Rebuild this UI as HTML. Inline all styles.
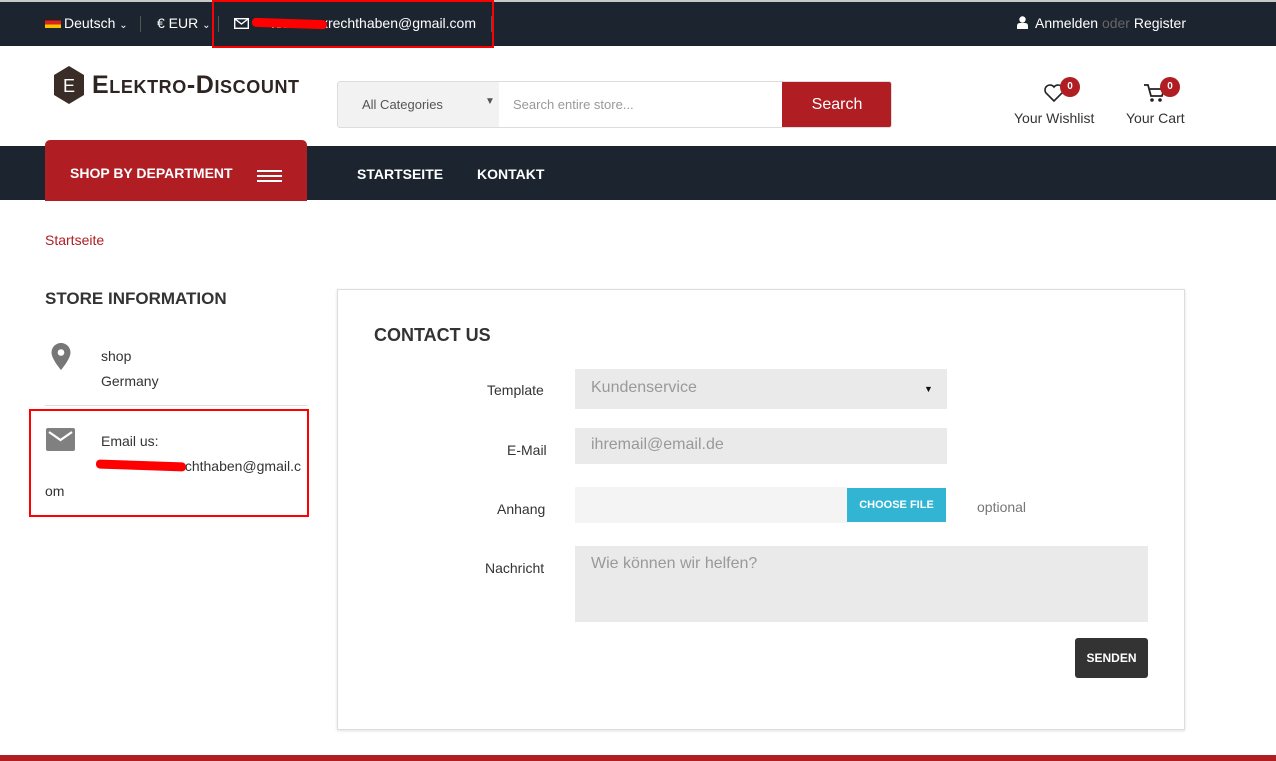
<!DOCTYPE html>
<html><head><meta charset="utf-8"><style>
*{box-sizing:border-box;margin:0;padding:0}
body{width:1276px;height:761px;overflow:hidden;background:#fff;font-family:"Liberation Sans",sans-serif;color:#333;position:relative}
.abs{position:absolute}
.top{position:absolute;left:0;top:0;width:1276px;height:46px;background:#1c2430;border-top:2px solid #c8c8c8;color:#fff;font-size:14px}
.nav{position:absolute;left:0;top:146px;width:1276px;height:54px;background:#1c2430}
.red{border:2px solid #f00}
</style></head><body>
<div class="top">
  <div class="abs" style="left:45px;top:15px;width:16px;height:11px;background:linear-gradient(#222 0 33%,#d22 33% 66%,#f5c400 66%)"></div>
  <div class="abs" style="left:64px;top:13px">Deutsch <span style="font-size:10px">⌄</span></div>
  <div class="abs" style="left:140px;top:14px;width:1px;height:16px;background:#555"></div>
  <div class="abs" style="left:157px;top:13px">€ EUR <span style="font-size:10px">⌄</span></div>
  <div class="abs" style="left:218px;top:14px;width:1px;height:16px;background:#555"></div>
  <svg class="abs" style="left:234px;top:16px" width="15" height="11" viewBox="0 0 15 11"><rect x=".7" y=".7" width="13.6" height="9.6" fill="none" stroke="#fff" stroke-width="1.4"/><path d="M1 1l6.5 5 6.5-5" fill="none" stroke="#fff" stroke-width="1.4"/></svg>
  <div class="abs" style="right:800px;top:13px;white-space:nowrap">xxxxxxxxrechthaben@gmail.com</div>
  <div class="abs" style="left:252px;top:17px;width:75px;height:9px;background:#f00;border-radius:4px;transform:rotate(2deg)"></div>
  <div class="abs" style="left:491px;top:14px;width:1px;height:16px;background:#555"></div>
  <div class="abs red" style="left:212px;top:-2px;width:282px;height:48px"></div>
  <svg class="abs" style="left:1017px;top:14px" width="11" height="13" viewBox="0 0 11 13"><circle cx="5.5" cy="3.5" r="3.2" fill="#fff"/><path d="M0 13v-3q0-3 3-3h5q3 0 3 3v3z" fill="#fff"/></svg>
  <div class="abs" style="left:1035px;top:13px">Anmelden <span style="color:#666">oder</span> Register</div>
</div>
<svg class="abs" style="left:52px;top:65px" width="34" height="40" viewBox="0 0 34 40"><path d="M17 1L32 10V30L17 39L2 30V10Z" fill="#3a2d28"/><text x="17" y="27" font-size="18" fill="#fff" text-anchor="middle" font-family="Liberation Sans">E</text></svg>
<div class="abs" style="left:92px;top:71px;font-size:25px;font-weight:bold;color:#2e2421;letter-spacing:.6px;font-variant:small-caps">Elektro-Discount</div>
<div class="abs" style="left:337px;top:81px;width:555px;height:47px;border:1px solid #ddd;border-radius:3px;background:#fff;overflow:hidden">
  <div class="abs" style="left:0;top:0;width:161px;height:45px;background:#f2f2f2"></div>
  <div class="abs" style="left:24px;top:15px;font-size:13px;color:#555">All Categories</div>
  <div class="abs" style="left:147px;top:14px;font-size:10px;color:#555">▼</div>
  <div class="abs" style="left:175px;top:15px;font-size:13px;color:#999">Search entire store...</div>
  <div class="abs" style="left:444px;top:0;width:110px;height:45px;background:#b01e24;color:#fff;font-size:16px;text-align:center;line-height:45px">Search</div>
</div>
<svg class="abs" style="left:1044px;top:84px" width="20" height="18" viewBox="0 0 20 18"><path d="M10 17L2 9A4.5 4.5 0 0 1 10 3A4.5 4.5 0 0 1 18 9Z" fill="none" stroke="#222" stroke-width="1.6"/></svg>
<div class="abs" style="left:1060px;top:77px;width:20px;height:20px;border-radius:50%;background:#b01e24;color:#fff;font-size:10px;font-weight:bold;text-align:center;line-height:20px">0</div>
<div class="abs" style="left:1014px;top:110px;font-size:14px;color:#333">Your Wishlist</div>
<svg class="abs" style="left:1144px;top:83px" width="22" height="20" viewBox="0 0 22 20"><path d="M0 2h4l3 11h11l2-7H6" fill="none" stroke="#222" stroke-width="1.8"/><circle cx="8" cy="17" r="1.8" fill="#222"/><circle cx="16" cy="17" r="1.8" fill="#222"/></svg>
<div class="abs" style="left:1160px;top:77px;width:20px;height:20px;border-radius:50%;background:#b01e24;color:#fff;font-size:10px;font-weight:bold;text-align:center;line-height:20px">0</div>
<div class="abs" style="left:1126px;top:110px;font-size:14px;color:#333">Your Cart</div>
<div class="nav"></div>
<div class="abs" style="left:45px;top:140px;width:262px;height:61px;background:#b01e24;border-radius:5px 5px 0 0"></div>
<div class="abs" style="left:70px;top:165px;font-size:14px;font-weight:bold;color:#fff">SHOP BY DEPARTMENT</div>
<div class="abs" style="left:257px;top:170px;width:25px;height:2px;background:#fff;box-shadow:0 5px #fff,0 10px #fff"></div>
<div class="abs" style="left:357px;top:166px;font-size:14px;font-weight:bold;color:#fff">STARTSEITE</div>
<div class="abs" style="left:477px;top:166px;font-size:14px;font-weight:bold;color:#fff">KONTAKT</div>
<div class="abs" style="left:45px;top:232px;font-size:14px;color:#b01e24">Startseite</div>
<div class="abs" style="left:45px;top:289px;font-size:17px;font-weight:bold;color:#333">STORE INFORMATION</div>
<svg class="abs" style="left:51px;top:343px" width="20" height="27" viewBox="0 0 20 27"><path d="M10 0A9.5 9.5 0 0 0 .5 9.5C.5 16 10 27 10 27S19.5 16 19.5 9.5A9.5 9.5 0 0 0 10 0Z" fill="#777"/><circle cx="10" cy="9.5" r="3.3" fill="#fff"/></svg>
<div class="abs" style="left:101px;top:344px;font-size:14px;line-height:25px;color:#333">shop<br>Germany</div>
<div class="abs" style="left:45px;top:405px;width:262px;height:1px;background:#e0e0e0"></div>
<svg class="abs" style="left:46px;top:428px" width="29" height="23" viewBox="0 0 29 23"><rect width="29" height="23" rx="2" fill="#808080"/><path d="M3 4l11.5 8L26 4" fill="none" stroke="#fff" stroke-width="2.2"/></svg>
<div class="abs" style="left:101px;top:433px;font-size:14px;color:#333">Email us:</div>
<div class="abs" style="right:975px;top:458px;font-size:14px;color:#333;white-space:nowrap">rechthaben@gmail.c</div>
<div class="abs" style="left:45px;top:483px;font-size:14px;color:#333">om</div>
<div class="abs" style="left:96px;top:461px;width:90px;height:9px;background:#f00;border-radius:4px;transform:rotate(2deg)"></div>
<div class="abs red" style="left:29px;top:409px;width:280px;height:108px"></div>
<div class="abs" style="left:337px;top:289px;width:848px;height:441px;border:1px solid #ddd;box-shadow:0 1px 3px rgba(0,0,0,.12)"></div>
<div class="abs" style="left:374px;top:325px;font-size:18px;font-weight:bold;color:#333">CONTACT US</div>
<div class="abs" style="left:487px;top:382px;font-size:14px">Template</div>
<div class="abs" style="left:575px;top:369px;width:372px;height:40px;background:#eaeaea"></div>
<div class="abs" style="left:591px;top:379px;font-size:16px;color:#999">Kundenservice</div>
<div class="abs" style="left:924px;top:384px;font-size:9px;color:#111">▼</div>
<div class="abs" style="left:507px;top:442px;font-size:14px">E-Mail</div>
<div class="abs" style="left:575px;top:428px;width:372px;height:36px;background:#eaeaea"></div>
<div class="abs" style="left:591px;top:436px;font-size:16px;color:#999">ihremail@email.de</div>
<div class="abs" style="left:497px;top:501px;font-size:14px">Anhang</div>
<div class="abs" style="left:575px;top:487px;width:272px;height:36px;background:#f4f4f4"></div>
<div class="abs" style="left:847px;top:488px;width:99px;height:34px;background:#31b5d2;color:#fff;font-size:11px;font-weight:bold;text-align:center;line-height:34px">CHOOSE FILE</div>
<div class="abs" style="left:977px;top:499px;font-size:14px;color:#777">optional</div>
<div class="abs" style="left:485px;top:560px;font-size:14px">Nachricht</div>
<div class="abs" style="left:575px;top:546px;width:573px;height:76px;background:#eaeaea"></div>
<div class="abs" style="left:591px;top:555px;font-size:16px;color:#999">Wie können wir helfen?</div>
<div class="abs" style="left:1075px;top:638px;width:73px;height:40px;background:#333;border-radius:3px;color:#fff;font-size:12px;font-weight:bold;text-align:center;line-height:40px">SENDEN</div>
<div class="abs" style="left:0;top:755px;width:1276px;height:6px;background:#b01e24"></div>
</body></html>
